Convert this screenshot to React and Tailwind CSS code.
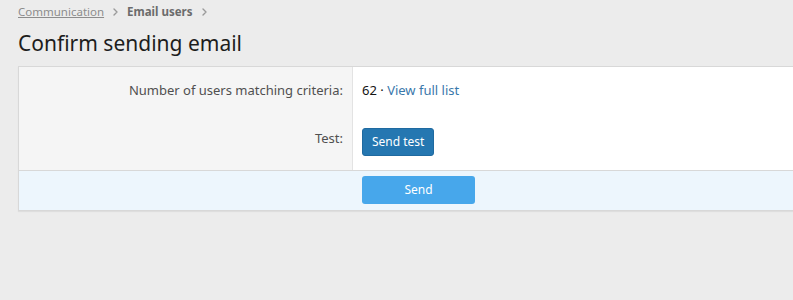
import React from "react";

const Chevron = () => (
  <svg width="5" height="8" viewBox="0 0 5 8" className="mx-[9px]" fill="none">
    <path d="M1 1l3 3-3 3" stroke="#9a9a9a" strokeWidth="1.4" strokeLinecap="round" strokeLinejoin="round" />
  </svg>
);

const App = () => {
  return (
    <div className="w-[793px] h-[300px] overflow-hidden bg-[#ececec] text-[#141414] font-['Noto_Sans',sans-serif]">
      <div className="pl-[18px] pt-[3px]">
        {/* Breadcrumb */}
        <div className="flex items-center text-[11.5px] text-[#8c8c8c] h-[17px]">
          <span className="underline">Communication</span>
          <Chevron />
          <span className="font-bold text-[#6b6b6b]">Email users</span>
          <Chevron />
        </div>

        {/* Title */}
        <h1 className="text-[21px] leading-[28px] mt-[9px] text-[#1d1d1d]">Confirm sending email</h1>

        {/* Block */}
        <div className="w-[800px] mt-[9px] border border-[#d8d8d8] bg-white shadow-[0_1px_1px_rgba(0,0,0,0.06)]">
          <div className="flex">
            <div className="w-[334px] bg-[#f5f5f5] border-r border-[#e3e3e3] text-right pr-[9px] text-[13px] text-[#505050]">
              <div className="pt-[14px] h-[51px] leading-[18px]">Number of users matching criteria:</div>
              <div className="pt-[11px] h-[52px] leading-[18px]">Test:</div>
            </div>
            <div className="flex-1 pl-[9px] text-[13px]">
              <div className="pt-[14px] h-[51px] leading-[18px]">
                62 · <span className="text-[#3a78ab]">View full list</span>
              </div>
              <div className="pt-[10px] h-[52px]">
                <button className="h-[28px] px-[9px] rounded-[3px] bg-[#2577b1] text-white text-[12px] border border-[#1f6aa0]">
                  Send test
                </button>
              </div>
            </div>
          </div>
          <div className="border-t border-[#d8d8d8] bg-[#edf6fd] h-[40px] pl-[343px] pt-[5px]">
            <button className="h-[28px] w-[113px] rounded-[3px] bg-[#47a7eb] text-white text-[12px]">
              Send
            </button>
          </div>
        </div>
      </div>
    </div>
  );
};

export default App;
